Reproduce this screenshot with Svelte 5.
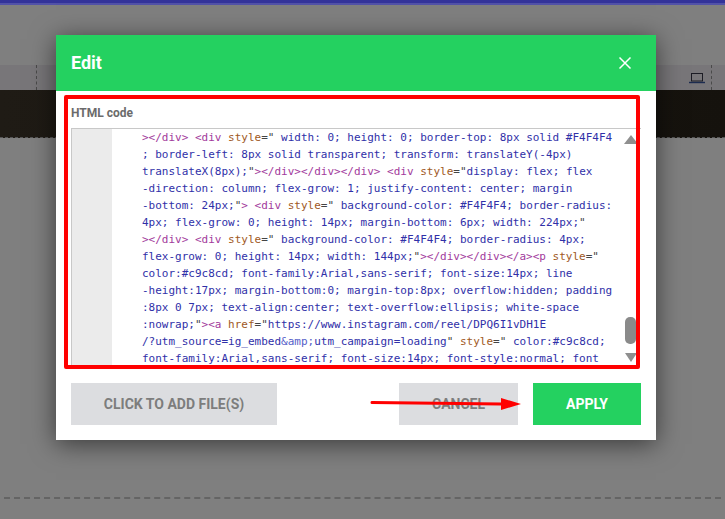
<script>
	const lines = [
		[['t', '></div> <div '], ['a', 'style'], ['p', '="'], ['v', ' width: 0; height: 0; border-top: 8px solid #F4F4F4']],
		[['v', '; border-left: 8px solid transparent; transform: translateY(-4px)']],
		[['v', 'translateX(8px);'], ['p', '"'], ['t', '></div></div></div> <div '], ['a', 'style'], ['p', '="'], ['v', 'display: flex; flex']],
		[['v', '-direction: column; flex-grow: 1; justify-content: center; margin']],
		[['v', '-bottom: 24px;'], ['p', '"'], ['t', '> <div '], ['a', 'style'], ['p', '="'], ['v', ' background-color: #F4F4F4; border-radius:']],
		[['v', '4px; flex-grow: 0; height: 14px; margin-bottom: 6px; width: 224px;'], ['p', '"']],
		[['t', '></div> <div '], ['a', 'style'], ['p', '="'], ['v', ' background-color: #F4F4F4; border-radius: 4px;']],
		[['v', 'flex-grow: 0; height: 14px; width: 144px;'], ['p', '"'], ['t', '></div></div></a><p '], ['a', 'style'], ['p', '="']],
		[['v', 'color:#c9c8cd; font-family:Arial,sans-serif; font-size:14px; line']],
		[['v', '-height:17px; margin-bottom:0; margin-top:8px; overflow:hidden; padding']],
		[['v', ':8px 0 7px; text-align:center; text-overflow:ellipsis; white-space']],
		[['v', ':nowrap;'], ['p', '"'], ['t', '><a '], ['a', 'href'], ['p', '="'], ['v', 'https://www.instagram.com/reel/DPQ6I1vDH1E']],
		[['v', '/?utm_source=ig_embed'], ['e', '&amp;'], ['v', 'utm_campaign=loading'], ['p', '"'], ['a', ' style'], ['p', '="'], ['v', ' color:#c9c8cd;']],
		[['v', 'font-family:Arial,sans-serif; font-size:14px; font-style:normal; font']]
	];
</script>

<div class="page">
	<div class="topbar"></div>
	<div class="toolbar">
		<span class="tick left"></span>
		<svg class="laptop" width="16" height="12" viewBox="0 0 16 12" aria-hidden="true">
			<rect x="2.5" y="1.5" width="11" height="7.5" fill="none" stroke="#1c1c24" stroke-width="1" />
			<path d="M0 10.5h16" stroke="#1c2c50" stroke-width="1.4" />
		</svg>
		<span class="tick right"></span>
	</div>
	<div class="hero"></div>
	<div class="rest"></div>
	<div class="dashes"></div>

	<div class="modal">
		<header class="head">
			<span class="title">Edit</span>
			<svg class="close" width="14" height="14" viewBox="0 0 14 14" aria-hidden="true">
				<path d="M1.5 1.5l11 11M12.5 1.5l-11 11" stroke="#fff" stroke-width="1.5" />
			</svg>
		</header>
		<div class="body">
			<div class="label">HTML code</div>
			<div class="editor">
				<div class="gutter"></div>
				<div class="code">
					{#each lines as line}
						<div class="line">{#each line as [kind, text]}<span class={kind}>{text}</span>{/each}</div>
					{/each}
				</div>
				<div class="scroll">
					<span class="up"></span>
					<span class="thumb"></span>
					<span class="down"></span>
				</div>
			</div>
		</div>
		<footer class="foot">
			<button class="btn add">CLICK TO ADD FILE(S)</button>
			<span class="space"></span>
			<button class="btn cancel">CANCEL</button>
			<button class="btn apply">APPLY</button>
		</footer>
		<div class="redbox"></div>
		<svg class="arrow" width="152" height="14" viewBox="0 0 152 14" aria-hidden="true">
			<path d="M2 5.6L131 7" stroke="#f00" stroke-width="3" stroke-linecap="round" />
			<path d="M131 1L151 7L131 13Z" fill="#f00" />
		</svg>
	</div>
</div>

<style>
	:global(body) {
		margin: 0;
		background: #7f7f7f;
	}

	.page {
		position: relative;
		width: 725px;
		height: 519px;
		overflow: hidden;
		background: #7f7f7f;
		font-family: Roboto, sans-serif;
	}

	.topbar {
		height: 3px;
		background: #333399;
		border-bottom: 2px solid #5252a8;
	}

	.toolbar {
		display: flex;
		align-items: center;
		height: 25px;
		margin-top: 60px;
		padding: 0 13px 0 36px;
		background: #787679;
	}

	.tick {
		width: 0;
		height: 25px;
		border-left: 1px dashed #4a4a4a;
	}

	.tick.left {
		margin-right: auto;
	}

	.laptop {
		margin-right: 6px;
	}

	.hero {
		height: 47px;
		background: linear-gradient(90deg, #1f1b15, #15120d);
		border-bottom: 1px dashed #555;
	}

	.rest {
		height: 359px;
	}

	.dashes {
		height: 0;
		margin: 0 4px;
		border-top: 2px dashed #646464;
	}

	.modal {
		position: absolute;
		top: 35px;
		left: 56px;
		width: 600px;
		height: 405px;
		background: #fff;
		box-shadow: 0 4px 24px rgba(0, 0, 0, 0.55);
	}

	.head {
		display: flex;
		align-items: center;
		justify-content: space-between;
		height: 56px;
		padding: 0 24px 0 15px;
		background: #24d160;
		color: #fff;
	}

	.title {
		margin-bottom: 2px;
		font-size: 18px;
		font-weight: 700;
	}

	.body {
		padding: 0 15px;
	}

	.label {
		height: 37px;
		line-height: 44px;
		font-size: 12px;
		font-weight: 700;
		color: #6b6b6b;
		box-sizing: border-box;
	}

	.editor {
		display: flex;
		height: 238px;
		border-top: 1px solid #c8c8c8;
		border-left: 1px solid #c8c8c8;
		overflow: hidden;
		background: #fff;
	}

	.gutter {
		flex: none;
		width: 40px;
		background: #ebebeb;
	}

	.code {
		flex: 1;
		padding-left: 30px;
		font-family: 'DejaVu Sans Mono', monospace;
		font-size: 11px;
		line-height: 17px;
		white-space: pre;
	}

	.line {
		height: 17px;
	}

	.t {
		color: #a23a9c;
	}

	.a {
		color: #a0591e;
	}

	.p {
		color: #444;
	}

	.v {
		color: #3030a8;
	}

	.e {
		color: #5560c8;
	}

	.scroll {
		position: relative;
		flex: none;
		width: 19px;
	}

	.up,
	.down {
		position: absolute;
		width: 0;
		border-left: 6px solid transparent;
		border-right: 6px solid transparent;
	}

	.up {
		top: 6px;
		left: 2px;
		border-left-width: 7px;
		border-right-width: 7px;
		border-bottom: 9px solid #8f8f8f;
	}

	.down {
		top: 224px;
		left: 3px;
		border-top: 9px solid #8f8f8f;
	}

	.thumb {
		position: absolute;
		top: 188px;
		left: 3px;
		width: 11px;
		height: 27px;
		border-radius: 5px;
		background: #8a8a8a;
	}

	.foot {
		display: flex;
		gap: 15px;
		height: 42px;
		margin-top: 16px;
		padding: 0 15px;
	}

	.space {
		flex: 1;
		margin-left: -15px;
	}

	.btn {
		height: 42px;
		padding: 0;
		border: 0;
		font-family: Roboto, sans-serif;
		font-size: 14px;
		font-weight: 700;
		background: #dcdde0;
		color: #7d7d7d;
	}

	.add {
		width: 206px;
	}

	.cancel {
		width: 119px;
	}

	.apply {
		width: 108px;
		background: #24d160;
		color: #fff;
	}

	.redbox {
		position: absolute;
		top: 60px;
		left: 8px;
		width: 576px;
		height: 274px;
		box-sizing: border-box;
		border: 4px solid #f00;
		border-radius: 2px;
		pointer-events: none;
	}

	.arrow {
		position: absolute;
		top: 362px;
		left: 314px;
	}
</style>
